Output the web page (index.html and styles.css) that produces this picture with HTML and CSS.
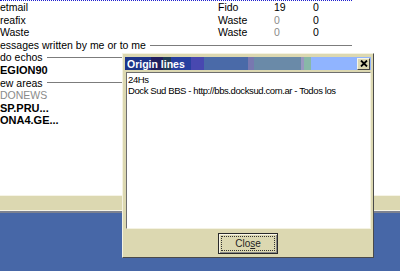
FILE: index.html
```html
<!DOCTYPE html>
<html lang="en">
<head>
    <meta charset="UTF-8">
    <title>Origin lines</title>
    <link rel="stylesheet" href="styles.css">
</head>
<body>
    <div class="screen">
        <div class="client">
            <div class="focusLine"></div>
            <div class="row"><span>etmail</span><span>Fido</span><span>19</span><span>0</span></div>
            <div class="row"><span>reafix</span><span>Waste</span><span class="dim">0</span><span>0</span></div>
            <div class="row"><span>Waste</span><span>Waste</span><span class="dim">0</span><span>0</span></div>
            <div class="group"><span>essages written by me or to me</span></div>
            <div class="group"><span>do echos</span></div>
            <div class="item bold">EGION90</div>
            <div class="group"><span>ew areas</span></div>
            <div class="item dim">DONEWS</div>
            <div class="item bold">SP.PRU...</div>
            <div class="item bold">ONA4.GE...</div>
        </div>
        <div class="statusBar"></div>
        <div class="statusShadow"></div>
    </div>

    <div class="dialog">
        <div class="titleBar">
            <span class="titleText">Origin lines</span>
            <span class="titleClose">
                <svg width="8" height="7" viewBox="0 0 8 7"><path d="M1 0.5 L7 6.5 M7 0.5 L1 6.5" stroke="#000" stroke-width="1.8"/></svg>
            </span>
        </div>
        <div class="memo">
            <div>24Hs</div>
            <div>Dock Sud BBS - http://bbs.docksud.com.ar - Todos los</div>
        </div>
        <div class="buttonRow">
            <button class="closeBtn"><span class="focusRect">Clo<u>s</u>e</span></button>
        </div>
    </div>
</body>
</html>
```

FILE: styles.css
```css
body { margin: 0; width: 400px; height: 271px; overflow: hidden; background: #4767a7; font-family: "Liberation Sans", Arial, sans-serif; font-size: 10.5px; color: #000; position: relative; }
.screen { width: 400px; }
.client { height: 195px; background: #fff; box-sizing: border-box; }
.focusLine { width: 352px; border-top: 1px dotted #2020d0; height: 0; }
.row { display: grid; grid-template-columns: 218px 56px 39px 1fr; width: 352px; line-height: 12.6px; }
.group { display: flex; align-items: center; gap: 4px; width: 352px; line-height: 12.6px; }
.group::after { content: ""; flex: 1; height: 1px; background: #7c7c7c; }
.item { line-height: 12.6px; }
.bold { font-weight: bold; font-size: 11px; }
.dim { color: #8a8a8a; }
.statusBar { height: 14px; background: #dcd8b1; border-top: 1px solid #f6f4e6; border-bottom: 1px solid #f6f4e6; }
.statusShadow { height: 2px; background: #7d8290; }

.dialog { position: absolute; left: 122px; top: 53px; width: 252px; box-sizing: border-box; background: #dcd8b1; border: 1px solid; border-color: #f4f2e2 #4a4a4a #4a4a4a #f4f2e2; padding: 3px 1px 3px 1px; display: flex; flex-direction: column; }
.titleBar { height: 13px; margin: 0 1px 0 1px; display: flex; align-items: center; background: linear-gradient(to right, #1e3488 0, #1e3488 26px, #221f5e 26px, #221f5e 38px, #203c55 38px, #203c55 46px, #2840a0 46px, #2840a0 66px, #4848b0 66px, #4848b0 79px, #4a6aa8 79px, #4a6aa8 123px, #7878b0 123px, #7878b0 129px, #6a8aa8 129px, #6a8aa8 176px, #9898c0 176px, #9898c0 179px, #88b8a8 179px, #88b8a8 186px, #90b4ff 186px); }
.titleText { color: #fff; font-weight: bold; padding-left: 2px; }
.titleClose { margin-left: auto; margin-right: 1px; width: 13px; height: 12px; box-sizing: border-box; background: #dcd8b1; border: 1px solid; border-color: #f6f4e6 #404040 #404040 #f6f4e6; display: flex; align-items: center; justify-content: center; }
.memo { margin: 2px 1px 0 2px; height: 157px; box-sizing: border-box; background: #fff; border: 1px solid; border-color: #6e6e6e #f4f2e2 #f4f2e2 #6e6e6e; padding: 1px 1px 0 1px; font-size: 9.5px; letter-spacing: -0.4px; line-height: 11px; white-space: nowrap; overflow: hidden; }
.buttonRow { display: flex; justify-content: center; padding-top: 4px; }
.closeBtn { width: 60px; height: 21px; padding: 2px; box-sizing: border-box; background: #dcd8b1; border: 1px solid #2a2a2a; box-shadow: inset 1px 1px #f6f4e6, inset -1px -1px #8a8a8a; font-family: inherit; font-size: 10px; color: #222; }
.focusRect { display: block; height: 15px; line-height: 14px; border: 1px dotted #333; box-sizing: border-box; }
```
